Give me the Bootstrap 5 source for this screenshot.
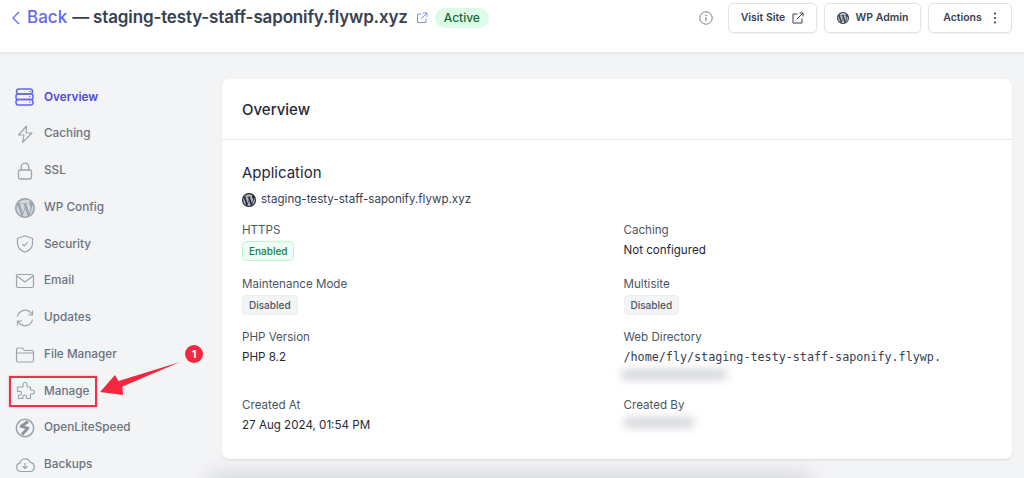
<!doctype html>
<html lang="en"><head><meta charset="utf-8"><title>Overview</title>
<link href="https://cdn.jsdelivr.net/npm/bootstrap@5.3.0/dist/css/bootstrap.min.css" rel="stylesheet">
<style>
html,body{height:478px;overflow:hidden}
body{background:#f3f4f6;font-family:Inter,"Liberation Sans",sans-serif;color:#1f2937;position:relative}
svg{display:block;flex:none}
.topbar{height:53px;background:#fff;border-bottom:1px solid #e5e7eb;box-shadow:0 1px 2px rgba(0,0,0,.05);padding:0 12px 17px 12px}
.back{color:#6366f1;font-size:17px;font-weight:500;text-decoration:none;gap:7px}
.site-title{font-size:17px;font-weight:600;color:#374151;letter-spacing:-.15px;margin-left:5px}
.active-pill{background:#dcfce7;color:#166534;font-size:12px;font-weight:500;border-radius:10px;height:20px;padding:0 9px;line-height:20px;margin-left:7px}
.hbtn{height:30px;background:#fff;border:1px solid #e2e4e8;border-radius:5px;font-size:10.5px;font-weight:600;color:#374151;padding:0;gap:7px;box-shadow:0 1px 2px rgba(0,0,0,.05);--bs-btn-hover-bg:#fff}
.bw-visit{width:89px}.bw-admin{width:97px}.bw-act{width:84px}
.hgroup{gap:7px}
.shell{padding:26px 12px 0 0;gap:0}
.sidenav{width:210px;padding-left:15px;flex:none}
.sideitem{height:36.75px;font-size:11.75px;font-weight:500;color:#6b7280;gap:9px;text-decoration:none}
.sideitem.on{color:#4f46e5;font-weight:600}
.sideico{width:20px;height:20px;color:#9ca3af}
.on .sideico{color:#6366f1}
.panel{width:790px;height:380px;background:#fff;border:0;border-radius:7px;box-shadow:0 1px 2px rgba(0,0,0,.1);--bs-card-bg:#fff;margin-left:12px}
.panel-head{height:61px;padding:2px 20px 0;border-bottom:1px solid #e5e7eb;font-size:15px;font-weight:500;color:#1f2937}
.panel-body{padding:23px 20px 0 20px}
.app-h{font-size:15px;font-weight:400;color:#1f2937;margin:0;line-height:20px}
.app-site{font-size:11.6px;color:#374151;gap:5px;margin-top:8px;height:18px}
.info{--bs-gutter-x:13px;--bs-gutter-y:0;margin-top:12px}
.cellbox{height:53.6px}
.cellbox.tall{height:68px}
.lbl{font-size:11.6px;color:#4b5563;line-height:18px}
.val{font-size:11.6px;color:#1f2937;line-height:18px;margin-top:2px}
.mono{font-family:"DejaVu Sans Mono","Liberation Mono",monospace;font-size:11.75px;letter-spacing:-.02px;white-space:nowrap;color:#374151;margin-top:3px}
.tag{display:block;width:fit-content;font-size:10px;font-weight:500;border-radius:4px;height:20px;line-height:18px;padding:0 6px;border:1px solid;margin-top:2px}
.tag-on{background:#f0fdf4;border-color:#bbf7d0;color:#15803d}
.tag-off{background:#f3f4f6;border-color:#eceef1;color:#4b5563}
.smudge{background:#d6d8dc;filter:blur(4px);border-radius:4px}
.sm1{width:106px;height:11px;margin:2px 0 0 -3px}
.sm2{width:70px;height:11px;margin:3px 0 0 0}
.outline-red{position:absolute;left:9px;top:376px;width:88px;height:31px;border:2px solid #f0304a;box-shadow:0 0 2px rgba(240,48,74,.4)}
.num-red{position:absolute;left:185px;top:345px;width:18px;height:18px;border-radius:50%;background:#f5263f;color:#fff;font-size:11px;font-weight:700;line-height:18px;text-align:center}
.arrow-red{position:absolute;left:98px;top:358px}
.floor-shadow{position:absolute;left:210px;top:474px;width:600px;height:20px;background:#d2d4d7;filter:blur(9px)}
</style></head>
<body>
<header class="topbar d-flex align-items-center">
 <a class="back d-flex align-items-center" href="#"><svg width="8" height="14" viewBox="0 0 8 14" fill="none" stroke="#6366f1" stroke-width="1.300"><path d="M7 1 1 7l6 6"/></svg>Back</a>
 <span class="site-title">— staging-testy-staff-saponify.flywp.xyz</span>
 <svg class="ms-2" width="12" height="12" viewBox="0 0 12 12" fill="none" stroke="#818cf8" stroke-width="1"><path d="M5.500 2H1.500v8.500H10V6.500M7 1h4v4M11 1 5 7"/></svg>
 <span class="active-pill">Active</span>
 <div class="ms-auto d-flex align-items-center hgroup">
  <svg class="icon-info" width="14" height="14" viewBox="0 0 14 14" fill="none" stroke="#6b7280" stroke-width=".9" style="margin-right:8px"><circle cx="7" cy="7" r="6.200"/><path d="M7 6.300v3.400" stroke-width="1.100"/><circle cx="7" cy="4.300" r=".4"/></svg>
  <button class="btn hbtn bw-visit d-flex align-items-center justify-content-center">Visit Site <svg width="12" height="12" viewBox="0 0 12 12" fill="none" stroke="#374151" stroke-width="1"><path d="M5.500 2H1v9h9V6.500M7.500 1H11v3.500M11 1 5 7"/></svg></button>
  <button class="btn hbtn bw-admin d-flex align-items-center justify-content-center"><svg width="12" height="12" viewBox="0 0 20 20"><use href="#wpmark" fill="#374151"/></svg> WP Admin</button>
  <button class="btn hbtn bw-act d-flex align-items-center justify-content-center">Actions <svg class="ms-1" width="4" height="12" viewBox="0 0 4 12" fill="#374151"><circle cx="2" cy="1.500" r="1.100"/><circle cx="2" cy="6" r="1.100"/><circle cx="2" cy="10.500" r="1.100"/></svg></button>
 </div>
</header>

<svg width="0" height="0" class="position-absolute"><defs>
 <g id="wpmark"><circle cx="10" cy="10" r="10" opacity=".35"/><path fill-rule="evenodd" d="M10 0a10 10 0 1 0 0 20 10 10 0 0 0 0-20ZM1.600 10c0-1.200.3-2.400.7-3.400l4 11A8.400 8.400 0 0 1 1.600 10Zm8.400 8.400c-.8 0-1.600-.1-2.400-.3l2.500-7.400 2.600 7.100v.2c-.9.3-1.800.4-2.700.4Zm1.200-12.400c.5 0 1-.1 1-.1.4 0 .4-.7-.1-.7 0 0-1.400.1-2.200.1-.8 0-2.200-.1-2.200-.1-.5 0-.5.7-.1.7 0 0 .4.1.9.1l1.300 3.600-1.900 5.500-3-9.100c.5 0 1-.1 1-.1.4 0 .4-.7-.1-.7 0 0-1.400.1-2.200.1h-.5A8.400 8.400 0 0 1 15.700 3.800h-.1c-.8 0-1.400.7-1.400 1.500 0 .7.4 1.300.8 2 .3.6.7 1.300.7 2.300 0 .7-.3 1.500-.6 2.600l-.8 2.700-3.100-8.900Zm3.100 11.300 2.600-7.400c.5-1.200.6-2.100.6-3l-.1-.8a8.400 8.400 0 0 1-3.100 11.200Z"/></g>
</defs></svg>

<div class="shell d-flex">
 <nav class="sidenav">
  <a href="#" class="sideitem on d-flex align-items-center"><svg class="sideico" viewBox="0 0 20 20" fill="none" stroke="currentColor" stroke-width="1.500"><rect x="1.500" y="2" width="16" height="5" rx="2.500"/><rect x="1" y="7" width="17" height="5.500" rx="2"/><rect x="1" y="12.500" width="17" height="5.500" rx="2.500"/><path d="M14 9.800h1.500M14 15.200h1.500M14 4.500h1.500" stroke-width="1"/></svg>Overview</a>
  <a href="#" class="sideitem d-flex align-items-center"><svg class="sideico" viewBox="0 0 20 20" fill="none" stroke="currentColor" stroke-width="1.200" stroke-linejoin="round"><path d="M11.500 2 3.500 11h5.500l-1.500 7.500L17 9h-6l.5-7Z"/></svg>Caching</a>
  <a href="#" class="sideitem d-flex align-items-center"><svg class="sideico" viewBox="0 0 20 20" fill="none" stroke="currentColor" stroke-width="1.300"><rect x="3.500" y="9" width="13" height="9" rx="1.800"/><path d="M6.200 9V6a3.800 3.800 0 0 1 7.600 0v3"/></svg>SSL</a>
  <a href="#" class="sideitem d-flex align-items-center"><svg class="sideico" viewBox="0 0 20 20"><use href="#wpmark" fill="currentColor"/></svg>WP Config</a>
  <a href="#" class="sideitem d-flex align-items-center"><svg class="sideico" viewBox="0 0 20 20" fill="none" stroke="currentColor" stroke-width="1.200" stroke-linejoin="round"><path d="M10 1.800 17.500 4.500v5c0 4.200-3 7-7.500 8.700C5.500 16.500 2.500 13.700 2.500 9.500v-5L10 1.800Z"/><path d="m7.200 9.800 2 2 3.600-3.600"/></svg>Security</a>
  <a href="#" class="sideitem d-flex align-items-center"><svg class="sideico" viewBox="0 0 20 20" fill="none" stroke="currentColor" stroke-width="1.200"><rect x="1.500" y="3.500" width="17" height="13" rx="1.800"/><path d="m2 5 8 6 8-6"/></svg>Email</a>
  <a href="#" class="sideitem d-flex align-items-center"><svg class="sideico" viewBox="0 0 20 20" fill="none" stroke="currentColor" stroke-width="1.200"><path d="M2.500 8.500A7.700 7.700 0 0 1 15.500 4.500L17.500 7M17.500 2.500V7H13M17.500 11.500A7.700 7.700 0 0 1 4.500 15.500L2.500 13M2.500 17.500V13H7"/></svg>Updates</a>
  <a href="#" class="sideitem d-flex align-items-center"><svg class="sideico" viewBox="0 0 20 20" fill="none" stroke="currentColor" stroke-width="1.200" stroke-linejoin="round"><path d="M1.500 15.500v-11A1.500 1.500 0 0 1 3 3h4.500l2 2.500H17A1.500 1.500 0 0 1 18.500 7v8.500A1.500 1.500 0 0 1 17 17H3a1.500 1.500 0 0 1-1.500-1.500ZM1.500 8h17"/></svg>File Manager</a>
  <a href="#" class="sideitem d-flex align-items-center"><svg class="sideico" viewBox="0 0 20 20" fill="none" stroke="currentColor" stroke-width="1.100" stroke-linejoin="round"><path d="M8 3.500a2 2 0 0 1 4 0V6h3.500v3h1.800a2 2 0 0 1 0 4h-1.800v4.500h-4v-1.600a1.800 1.800 0 0 0-3.600 0v1.600H3.500v-3.500h1.300a1.800 1.800 0 0 0 0-3.600H2.500V6H8V3.500Z"/></svg>Manage</a>
  <a href="#" class="sideitem d-flex align-items-center"><svg class="sideico" viewBox="0 0 20 20" fill="none" stroke="currentColor" stroke-width="1.500"><circle cx="10" cy="10" r="8.700"/><path d="M13 3.500 6 8.500l7 1.500-6 6.500" stroke-width="2.800" stroke-linejoin="round" stroke="#8b9099"/></svg>OpenLiteSpeed</a>
  <a href="#" class="sideitem d-flex align-items-center"><svg class="sideico" viewBox="0 0 20 20" fill="none" stroke="currentColor" stroke-width="1.200" stroke-linejoin="round"><path d="M5.500 16.500A4.200 4.200 0 0 1 5 8.200a5.300 5.300 0 0 1 10.200-.8 4.600 4.600 0 0 1 .3 9.100h-10ZM10 8v5.500M7.500 11.200 10 13.700l2.500-2.500"/></svg>Backups</a>
 </nav>

 <main class="card panel">
  <div class="panel-head d-flex align-items-center">Overview</div>
  <div class="panel-body">
   <h2 class="app-h">Application</h2>
   <div class="app-site d-flex align-items-center"><svg width="14" height="14" viewBox="0 0 20 20"><use href="#wpmark" fill="#1f2937"/></svg>staging-testy-staff-saponify.flywp.xyz</div>
   <div class="row info">
    <div class="col-6 cellbox"><div class="lbl">HTTPS</div><span class="tag tag-on">Enabled</span></div>
    <div class="col-6 cellbox"><div class="lbl">Caching</div><div class="val">Not configured</div></div>
    <div class="col-6 cellbox"><div class="lbl">Maintenance Mode</div><span class="tag tag-off">Disabled</span></div>
    <div class="col-6 cellbox"><div class="lbl">Multisite</div><span class="tag tag-off">Disabled</span></div>
    <div class="col-6 cellbox tall"><div class="lbl">PHP Version</div><div class="val">PHP 8.2</div></div>
    <div class="col-6 cellbox tall"><div class="lbl">Web Directory</div><div class="mono">/home/fly/staging-testy-staff-saponify.flywp.</div><div class="smudge sm1"></div></div>
    <div class="col-6 cellbox"><div class="lbl">Created At</div><div class="val">27 Aug 2024, 01:54 PM</div></div>
    <div class="col-6 cellbox"><div class="lbl">Created By</div><div class="smudge sm2"></div></div>
   </div>
  </div>
 </main>
</div>

<div class="floor-shadow"></div>
<div class="outline-red"></div>
<div class="num-red">1</div>
<svg class="arrow-red" width="86" height="40" viewBox="0 0 86 40" fill="#f5263f"><path d="M2 34 17 17 20.500 23 82 4 24.500 28.500 25 37Z"/></svg>
</body></html>
